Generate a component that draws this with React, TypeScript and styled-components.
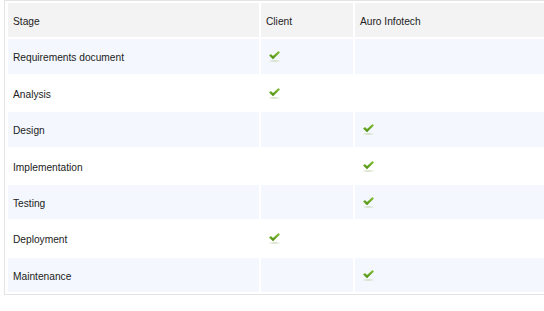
import React from 'react';
import styled, { createGlobalStyle } from 'styled-components';

const GlobalStyle = createGlobalStyle`
  body {
    margin: 0;
    background: #fff;
    overflow: hidden;
    font-family: "Liberation Sans", Arial, sans-serif;
  }
`;

interface IStage {
  name: string;
  client?: boolean;
  auro?: boolean;
}

const stages: IStage[] = [
  { name: 'Requirements document', client: true },
  { name: 'Analysis', client: true },
  { name: 'Design', auro: true },
  { name: 'Implementation', auro: true },
  { name: 'Testing', auro: true },
  { name: 'Deployment', client: true },
  { name: 'Maintenance', auro: true }
];

// the table is wider than the window, its right part is cut off
const Frame = styled.div`
  margin-left: 4px;
  width: 640px;
  border: 1px solid #e4e4e4;
  padding: 0 1px;
`;

const Grid = styled.table`
  width: 100%;
  border-collapse: separate;
  border-spacing: 2px;
  font-size: 10.2px;
  color: #222;
`;

const HeadCell = styled.th<{ w?: number }>`
  width: ${p => (p.w ? `${p.w}px` : 'auto')};
  background: #f3f3f3;
  text-align: left;
  font-weight: normal;
  padding: 12px 5px 8px;
  height: 14.4px;
  line-height: 14.4px;
  vertical-align: top;
`;

const Cell = styled.td<{ striped: boolean }>`
  background: ${p => (p.striped ? '#f4f8fe' : '#fff')};
  padding: 12px 5px 8px;
  height: 14.4px;
  line-height: 14.4px;
  vertical-align: top;
`;

const Tick = () => (
  <svg width="14" height="12" viewBox="0 0 14 12" style={{ display: 'block', marginLeft: 2 }}>
    <defs>
      <linearGradient id="tk" x1="0" y1="0" x2="0" y2="1">
        <stop offset="0" stopColor="#8cc63f" />
        <stop offset="1" stopColor="#4a8a0c" />
      </linearGradient>
      <radialGradient id="sh" cx="0.5" cy="0.5" r="0.5">
        <stop offset="0" stopColor="#c9d8b8" />
        <stop offset="1" stopColor="#c9d8b8" stopOpacity="0" />
      </radialGradient>
    </defs>
    <ellipse cx="6.5" cy="10" rx="6.5" ry="1.5" fill="url(#sh)" />
    <path d="M1 4.6 L3 3 L5 5 L10.4 0 L12 1.6 L5 8.2 Z" fill="url(#tk)" />
  </svg>
);

export default function App() {
  return (
    <>
      <GlobalStyle />
      <Frame>
        <Grid>
          <thead>
            <tr>
              <HeadCell w={241}>Stage</HeadCell>
              <HeadCell w={82}>Client</HeadCell>
              <HeadCell>Auro Infotech</HeadCell>
            </tr>
          </thead>
          <tbody>
            {stages.map((s, i) => (
              <tr key={s.name}>
                <Cell striped={i % 2 === 0}>{s.name}</Cell>
                <Cell striped={i % 2 === 0}>{s.client && <Tick />}</Cell>
                <Cell striped={i % 2 === 0}>{s.auro && <Tick />}</Cell>
              </tr>
            ))}
          </tbody>
        </Grid>
      </Frame>
    </>
  );
}
